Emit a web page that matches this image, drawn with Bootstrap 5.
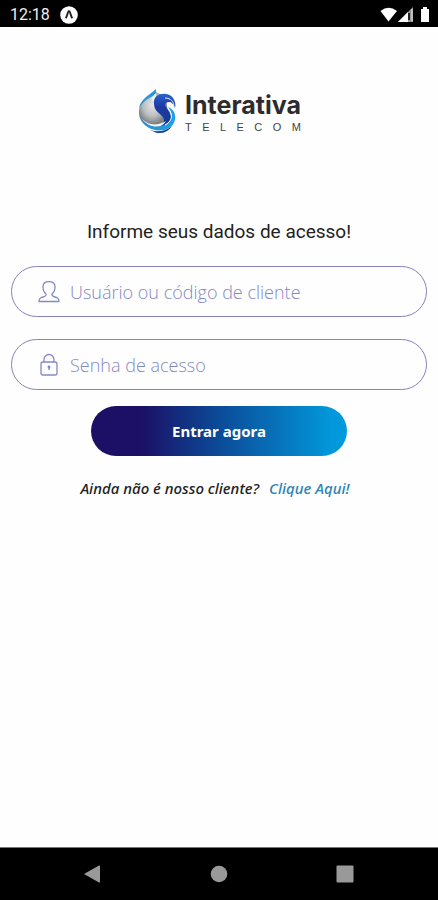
<!DOCTYPE html>
<html lang="pt-BR">
<head>
<meta charset="utf-8">
<meta name="viewport" content="width=device-width, initial-scale=1">
<title>Interativa Telecom</title>
<link href="https://cdn.jsdelivr.net/npm/bootstrap@5.3.0/dist/css/bootstrap.min.css" rel="stylesheet">
<style>
  body { font-family: Roboto, sans-serif; color: #222; background: #fefefe; }
  .status-bar { height: 27px; padding: 2px 8px 0 10px; background: #000; color: #eee; font-size: 16px; line-height: 24px; }
  .status-bar svg, .brand-logo svg, .system-nav svg, .field-box svg { display: block; flex: none; }
  .brand-logo { margin-top: 62px; gap: 8px; color: #2d2b2f; }
  .brand-name { font: 700 25px/32px Inter, sans-serif; }
  .brand-sub { font: 400 11px/13px "Liberation Sans", sans-serif; color: #444; }
  .login-title { font-size: 19px; line-height: 24px; margin: 85px 0 22px; font-weight: 400; }
  .login-form { padding: 0 11px; }
  .field-box { height: 51px; border: 1px solid #8583b9; border-radius: 26px; padding: 0 24px 0 26px; gap: 10px; margin-bottom: 22px; color: #8489c3; }
  .field-box:focus-within { border-color: #0b4b98; }
  .field-box .form-control { font: 300 18px/26px "Open Sans", sans-serif; color: #33317c; }
  .field-box .form-control::placeholder { color: #8489c3; opacity: 1; }
  .btn-enter { width: 256px; height: 50px; margin-top: -6px; border: 0; font: 700 15px/24px "Noto Sans", sans-serif; background: linear-gradient(90deg, #1b1066 0%, #1b1066 20%, #0b4b98 50%, #0299dc 95%, #0299dc 100%); }
  .signup-line { font: italic 500 15px/20px "Noto Sans", sans-serif; margin: 22px 0 0; gap: 10px; padding-right: 8px; }
  .signup-line a { color: #2c83b4; }
  .system-nav { height: 53px; background: #000; border-top: 1px solid #777; }
  .nav-keys { width: 270px; }
</style>
</head>
<body>
<div class="d-flex flex-column min-vh-100">
  <header class="status-bar d-flex align-items-center justify-content-between">
    <div class="d-flex align-items-center gap-2">
      <span>12:18</span>
      <svg width="20" height="18" viewBox="-2 0 20 18" aria-hidden="true"><circle cx="9" cy="9" r="8.800" fill="#fff"/><path d="M5.700 12.200c1.300-1.800 1.700-4.400 2.400-6.200.4-1.100 1.400-1.100 1.800 0 .7 1.800 1.100 4.400 2.400 6.200" fill="none" stroke="#222" stroke-width="1.900"/></svg>
    </div>
    <svg width="50" height="18" viewBox="0 0 50 18" aria-hidden="true">
      <path d="M.5 5Q8.500-1.500 17 5L8.500 15.500Z" fill="#fff"/>
      <path d="M18 16L33 1V16Z" fill="#999"/><path d="M18 16L28 6V16Z" fill="#fff"/><path d="M29 7V14" stroke="#222" stroke-width="2"/><path d="M32 3V15" stroke="#ccc" stroke-width="1.500"/>
      <path d="M43 1h4v2h2v13h-8V3h2z" fill="#fff"/>
    </svg>
  </header>

  <main class="flex-grow-1">
    <div class="brand-logo d-flex justify-content-center align-items-start">
      <svg width="40" height="46" viewBox="0 0 40 46" aria-hidden="true">
        <defs>
          <radialGradient id="silver" cx="45%" cy="35%"><stop offset="0" stop-color="#e5e6e7"/><stop offset=".6" stop-color="#bcbec0"/><stop offset="1" stop-color="#808286"/></radialGradient>
          <linearGradient id="swirl" x1="0" y1="0" x2="0" y2="1"><stop offset="0" stop-color="#2a62c8"/><stop offset=".4" stop-color="#1c3aa4"/><stop offset="1" stop-color="#123a94"/></linearGradient>
          <linearGradient id="ring" x1="0" y1="0" x2="1" y2="0"><stop offset="0" stop-color="#2f8fd0"/><stop offset="1" stop-color="#1ba0e8"/></linearGradient>
        </defs>
        <path d="M19 3C8 7 1 14 2 25C3 36 14 42 25 40L32 33L29 8Z" fill="url(#silver)"/>
        <path d="M2 19C4 10 11 7 19 0V6C13 8 7 11 2 19Z" fill="#2698dd"/>
        <path d="M14 9L19 4V9L16 13Z" fill="#f0f0f0"/>
        <path d="M17 14C16 4 31 2 36 9C38 12 39 16 38 19C36 13 32 12 29 14C26 17 33 21 34 27C35 34 30 38 23 37C28 34 28 30 25 27C21 23 17 21 17 14Z" fill="url(#swirl)"/>
        <path d="M28 9C34 9 37 13 37 18" fill="none" stroke="#dfe8f7" stroke-width="1"/>
        <path d="M3 27C8 36 20 38 29 32C24 41 9 40 3 27Z" fill="#f5fafe"/>
        <path d="M31 18C41 22 40 34 32 39C22 45 6 40 3 27C9 38 21 40 29 35C36 31 36 24 31 18Z" fill="url(#ring)"/>
        <path d="M33 22C36 28 34 33 28 36" fill="none" stroke="#fff" stroke-width="1"/>
        <path d="M13 41Q25 45 35 37Q30 45 20 44Z" fill="#17408f"/>
      </svg>
      <div>
        <div class="brand-name">Interativa</div>
        <div class="brand-sub d-flex justify-content-between"><span>T</span><span>E</span><span>L</span><span>E</span><span>C</span><span>O</span><span>M</span></div>
      </div>
    </div>

    <h1 class="login-title text-center">Informe seus dados de acesso!</h1>

    <form class="login-form" onsubmit="return false">
      <div class="field-box d-flex align-items-center">
        <label for="usuario">
          <svg role="img" aria-label="Usuário ou código de cliente" width="22" height="24" viewBox="0 0 22 24" fill="none" stroke="currentColor" stroke-width="1.300" stroke-linejoin="round"><path d="M8 14C5.500 12 5 10 5 7C5 3.500 7.500 1.700 11 1.700S17 3.500 17 7C17 10 16.500 12 14 14C13.500 16 15 16.500 17 17C20 17.800 21 18.500 21 21.500H1C1 18.500 2 17.800 5 17C7 16.500 8.500 16 8 14Z"/></svg>
        </label>
        <input class="form-control border-0 bg-transparent shadow-none p-0" id="usuario" type="text" placeholder="Usuário ou código de cliente">
      </div>
      <div class="field-box d-flex align-items-center">
        <label for="senha">
          <svg role="img" aria-label="Senha de acesso" width="22" height="24" viewBox="0 0 22 24" fill="none" stroke="currentColor" stroke-width="1.300"><rect x="3" y="9" width="16" height="13" rx="2"/><path d="M6 9V6.500a5 5 0 0 1 10 0V9M11 13v4"/><circle cx="11" cy="14" r=".8" fill="currentColor"/></svg>
        </label>
        <input class="form-control border-0 bg-transparent shadow-none p-0" id="senha" type="password" placeholder="Senha de acesso">
      </div>
      <div class="text-center"><button class="btn btn-primary btn-enter rounded-pill" type="submit">Entrar agora</button></div>
    </form>
    <p class="signup-line d-flex justify-content-center"><span>Ainda não é nosso cliente?</span><a class="text-decoration-none" href="#">Clique Aqui!</a></p>
  </main>

  <nav class="system-nav d-flex justify-content-center align-items-center" aria-label="Sistema">
    <div class="nav-keys d-flex justify-content-between">
      <button class="btn p-0 border-0" aria-label="Voltar"><svg width="18" height="18" viewBox="0 0 18 18"><path d="M0 9L15 .5q1-.3 1 .5v16q0 .8-1 .5Z" fill="#999"/></svg></button>
      <button class="btn p-0 border-0" aria-label="Início"><svg width="18" height="18" viewBox="0 0 18 18"><circle cx="9" cy="9" r="8.300" fill="#999"/></svg></button>
      <button class="btn p-0 border-0" aria-label="Recentes"><svg width="18" height="18" viewBox="0 0 18 18"><rect x=".5" y=".5" width="17" height="17" rx="1" fill="#999"/></svg></button>
    </div>
  </nav>
</div>
<script src="https://cdn.jsdelivr.net/npm/bootstrap@5.3.0/dist/js/bootstrap.bundle.min.js"></script>
</body>
</html>
